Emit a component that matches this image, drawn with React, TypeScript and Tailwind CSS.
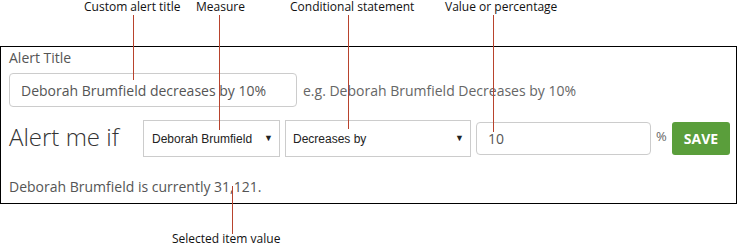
export default function App() {
  // callout labels and red leader lines sit over the form
  const callouts = [
    { label: 'Custom alert title', left: 84, line: 133, end: 80 },
    { label: 'Measure', left: 196, line: 219, end: 130 },
    { label: 'Conditional statement', left: 290, line: 348, end: 129 },
    { label: 'Value or percentage', left: 445, line: 493, end: 132 },
  ]

  return (
    <div className="relative w-[737px] h-[246px] bg-white font-['Open_Sans',sans-serif] overflow-hidden">
      <div className="h-[46px]" />

      <div className="h-[158px] border border-black pl-2 pr-[6px] pt-px">
        <p className="text-[14px] leading-[20px] text-[#555]">Alert Title</p>

        <div className="mt-[5px] flex items-center gap-[6px]">
          <div className="w-[288px] h-[34px] rounded border border-[#ccc] px-[11px] flex items-center text-[14px] text-[#555]">
            Deborah Brumfield decreases by 10%
          </div>
          <span className="text-[14px] text-[#666]">e.g. Deborah Brumfield Decreases by 10%</span>
        </div>

        <div className="mt-[13px] flex items-center h-[37px]">
          <span className="w-[134px] text-[24px] font-light leading-none text-[#333] -mt-[4px]">Alert me if</span>

          <div className="w-[137px] h-[37px] border border-[#ccc] pl-2 pr-[6px] flex items-center justify-between font-['Liberation_Sans',sans-serif] text-[12px] text-[#222]">
            <span>Deborah Brumfield</span>
            <span className="text-[9px]">▼</span>
          </div>

          <div className="ml-[5px] w-[186px] h-[37px] border border-[#ccc] pl-[7px] pr-[6px] flex items-center justify-between font-['Liberation_Sans',sans-serif] text-[12px] text-[#222]">
            <span>Decreases by</span>
            <span className="text-[9px]">▼</span>
          </div>

          <div className="ml-[5px] w-[175px] h-[33px] rounded border border-[#ccc] px-[11px] flex items-center text-[14px] text-[#555]">
            10
          </div>

          <span className="ml-[5px] text-[13px] text-[#666] -mt-[4px]">%</span>

          <button className="ml-auto w-[58px] h-[33px] rounded-[3px] bg-[#5a9e3b] text-white font-bold text-[14px]">
            SAVE
          </button>
        </div>

        <p className="mt-[20px] text-[14px] leading-[20px] text-[#555]">Deborah Brumfield is currently 31,121.</p>
      </div>

      {callouts.map((c) => (
        <div key={c.label}>
          <span className="absolute top-0 text-[12px] leading-[14px] text-[#111] whitespace-nowrap" style={{ left: c.left }}>
            {c.label}
          </span>
          <div className="absolute w-px bg-[#b8432d]" style={{ left: c.line, top: 15, height: c.end - 15 }} />
        </div>
      ))}

      <div className="absolute left-[232px] top-[186px] h-[48px] w-px bg-[#b8432d]" />
      <span className="absolute left-[172px] top-[232px] text-[12px] leading-[14px] text-[#111] whitespace-nowrap">
        Selected item value
      </span>
    </div>
  )
}
